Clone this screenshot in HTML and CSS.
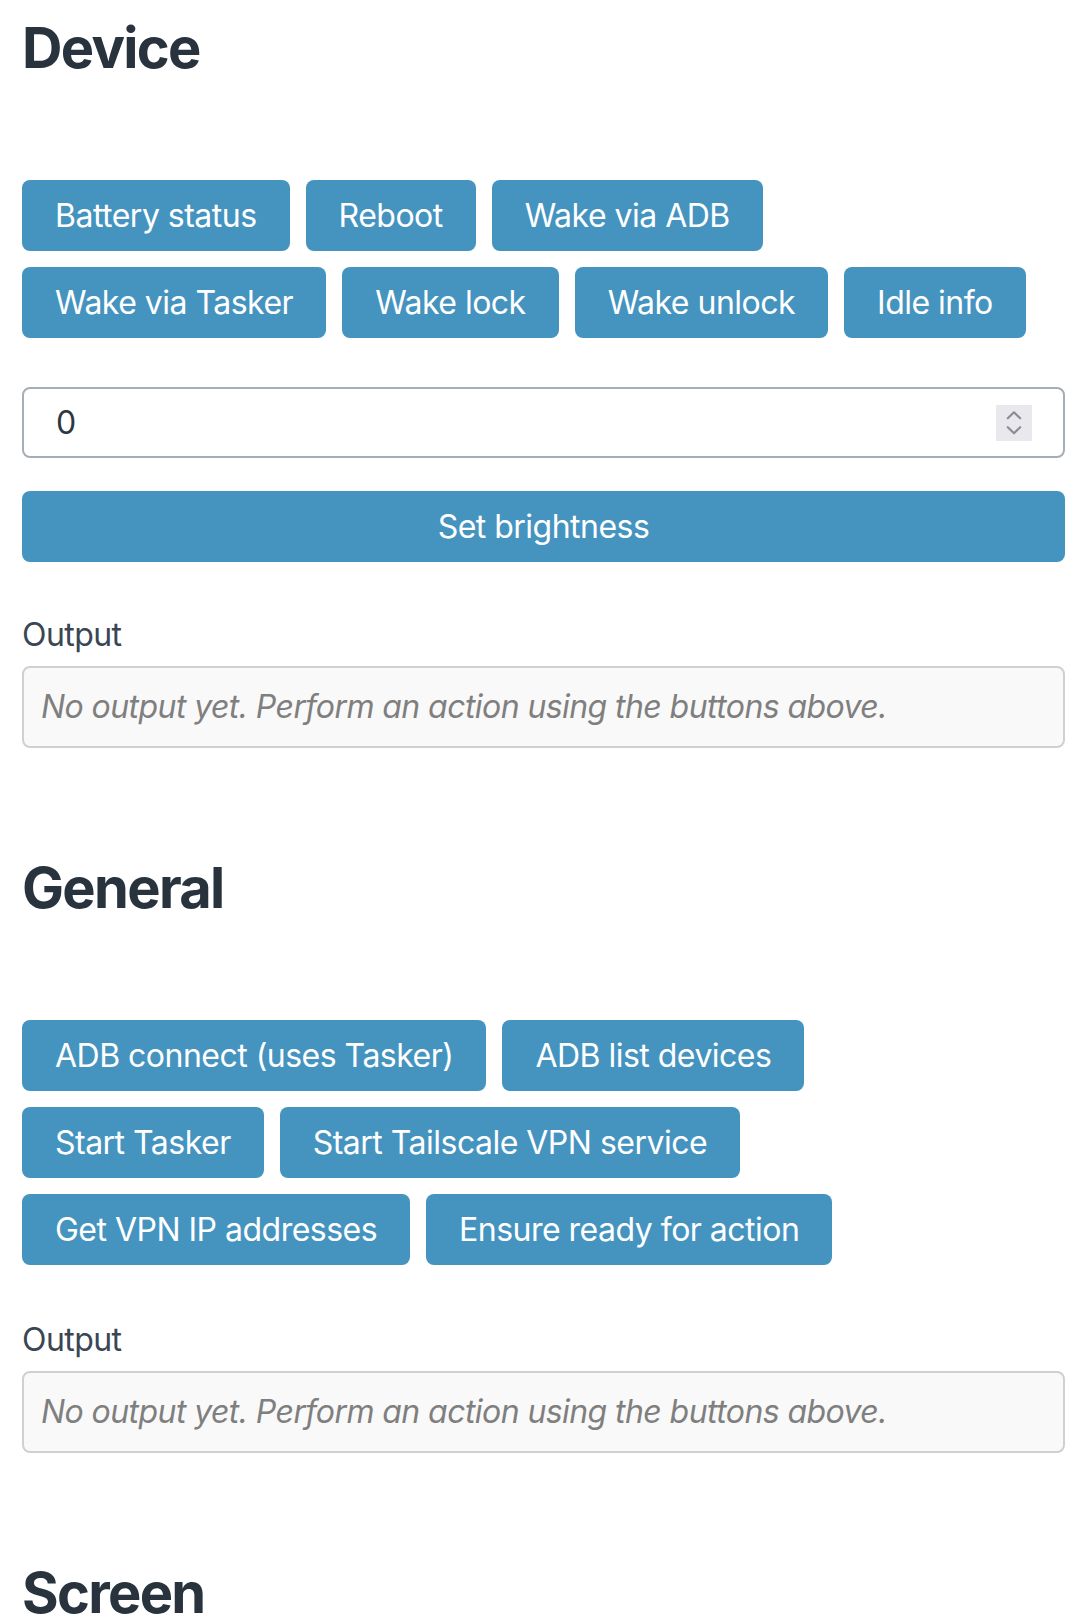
FILE: index.html
```html
<!DOCTYPE html>
<html lang="en">
<head>
<meta charset="utf-8">
<title>Device</title>
<link rel="stylesheet" href="styles.css">
</head>
<body>
<main class="page">
  <section class="section">
    <h2 class="heading">Device</h2>
    <div class="btn-group">
      <div class="btn-row">
        <button class="btn">Battery status</button>
        <button class="btn">Reboot</button>
        <button class="btn">Wake via ADB</button>
      </div>
      <div class="btn-row">
        <button class="btn">Wake via Tasker</button>
        <button class="btn">Wake lock</button>
        <button class="btn">Wake unlock</button>
        <button class="btn">Idle info</button>
      </div>
    </div>
    <div class="num-field">
      <input class="num-input" type="text" value="0">
      <span class="spinner">
        <svg width="36" height="36" viewBox="0 0 36 36">
          <path d="M11.8 13.3 L18 7.3 L24.2 13.3" fill="none" stroke="#8d8c93" stroke-width="2.2" stroke-linecap="round" stroke-linejoin="round"/>
          <path d="M11.8 22.2 L18 28.2 L24.2 22.2" fill="none" stroke="#8d8c93" stroke-width="2.2" stroke-linecap="round" stroke-linejoin="round"/>
        </svg>
      </span>
    </div>
    <button class="btn btn-block">Set brightness</button>
    <div class="output-label output-label-first">Output</div>
    <div class="output-box">No output yet. Perform an action using the buttons above.</div>
  </section>

  <section class="section section-next">
    <h2 class="heading">General</h2>
    <div class="btn-group">
      <div class="btn-row">
        <button class="btn">ADB connect (uses Tasker)</button>
        <button class="btn">ADB list devices</button>
      </div>
      <div class="btn-row">
        <button class="btn">Start Tasker</button>
        <button class="btn">Start Tailscale VPN service</button>
      </div>
      <div class="btn-row">
        <button class="btn">Get VPN IP addresses</button>
        <button class="btn">Ensure ready for action</button>
      </div>
    </div>
    <div class="output-label output-label-second">Output</div>
    <div class="output-box">No output yet. Perform an action using the buttons above.</div>
  </section>

  <section class="section section-next">
    <h2 class="heading">Screen</h2>
  </section>
</main>
</body>
</html>
```

FILE: styles.css
```css
html, body {
  margin: 0;
  padding: 0;
  background: #ffffff;
}

body {
  font-family: "Inter", "Noto Sans", "Liberation Sans", sans-serif;
  color: #2b3540;
}

.page {
  padding: 15px 17px 0 22px;
}

.section-next {
  margin-top: 107px;
}

.heading {
  margin: 0;
  font-size: 56px;
  line-height: 67px;
  font-weight: 700;
  color: #29333e;
  letter-spacing: -0.03em;
}

.btn-group {
  margin-top: 98px;
  display: flex;
  flex-direction: column;
  gap: 16px;
}

.btn-row {
  display: flex;
  gap: 16px;
}

.btn {
  font-family: inherit;
  font-size: 32px;
  line-height: 38px;
  letter-spacing: -0.016em;
  height: 71px;
  padding: 0 33px;
  border: 0;
  border-radius: 8px;
  background: #4594bf;
  color: #ffffff;
  white-space: nowrap;
  cursor: pointer;
}

.btn-block {
  display: block;
  width: 100%;
  margin-top: 33px;
}

.num-field {
  margin-top: 49px;
  height: 71px;
  box-sizing: border-box;
  border: 2px solid #a4aeb7;
  border-radius: 8px;
  display: flex;
  align-items: center;
  padding: 0 31px 0 32px;
  background: #ffffff;
}

.num-input {
  flex: 1;
  border: 0;
  outline: none;
  padding: 0;
  margin: 0;
  font-family: inherit;
  font-size: 32px;
  line-height: 40px;
  color: #2d3742;
  background: transparent;
}

.spinner {
  width: 36px;
  height: 36px;
  background: #e9e8ed;
  display: flex;
}

.output-label {
  font-size: 32px;
  line-height: 40px;
  letter-spacing: -0.018em;
  color: #3b4654;
}

.output-label-first {
  margin-top: 53px;
}

.output-label-second {
  margin-top: 55px;
}

.output-box {
  margin-top: 11px;
  box-sizing: border-box;
  height: 82px;
  border: 2px solid #d0d0d0;
  border-radius: 8px;
  background: #f9f9f9;
  padding: 19px 17px;
  font-size: 32px;
  line-height: 40px;
  letter-spacing: -0.018em;
  font-style: italic;
  color: #7f7f7f;
}
```
